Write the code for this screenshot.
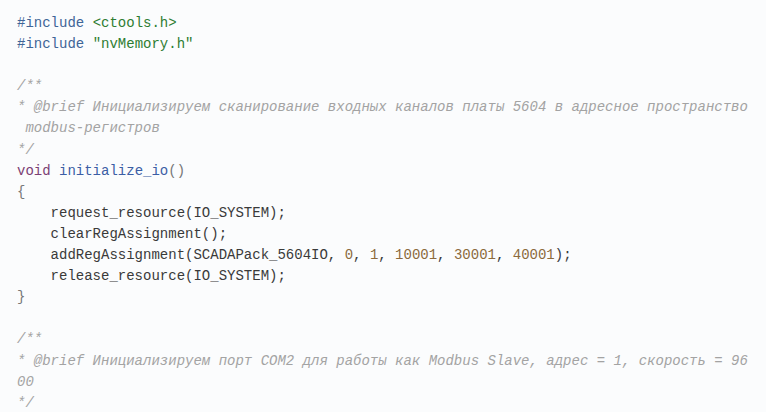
const kw = "text-[#3f6597]";
const str = "text-[#2e7d32]";
const typ = "text-[#7b3f74]";
const fn = "text-[#3b5ea5]";
const num = "text-[#8c6a3c]";
const cmt = "text-[#a3a3a3] italic";
const punc = "text-[#777777]";

function Line({ children }: { children?: React.ReactNode }) {
	return <div className="h-[21.1px] leading-[21.1px]">{children ?? " "}</div>;
}

export default function App() {
	return (
		<div className="w-[766px] h-[412px] overflow-hidden bg-[#fbfcfd]">
			<pre
				className="pt-[13px] pl-[17px] text-[14px] text-[#3a3a3a] whitespace-pre"
				style={{ fontFamily: '"Liberation Mono", "Courier New", monospace' }}
			>
				<Line>
					<span className={kw}>#include</span> <span className={str}>&lt;ctools.h&gt;</span>
				</Line>
				<Line>
					<span className={kw}>#include</span> <span className={str}>"nvMemory.h"</span>
				</Line>
				<Line />
				<Line>
					<span className={cmt}>/**</span>
				</Line>
				<Line>
					<span className={cmt}>
						* @brief Инициализируем сканирование входных каналов платы 5604 в адресное пространство
					</span>
				</Line>
				<Line>
					<span className={cmt}> modbus-регистров</span>
				</Line>
				<Line>
					<span className={cmt}>*/</span>
				</Line>
				<Line>
					<span className={typ}>void</span> <span className={fn}>initialize_io</span>
					<span className={punc}>()</span>
				</Line>
				<Line>
					<span className={punc}>{"{"}</span>
				</Line>
				<Line>{"    request_resource(IO_SYSTEM);"}</Line>
				<Line>{"    clearRegAssignment();"}</Line>
				<Line>
					{"    addRegAssignment(SCADAPack_5604IO, "}
					<span className={num}>0</span>, <span className={num}>1</span>,{" "}
					<span className={num}>10001</span>, <span className={num}>30001</span>,{" "}
					<span className={num}>40001</span>);
				</Line>
				<Line>{"    release_resource(IO_SYSTEM);"}</Line>
				<Line>
					<span className={punc}>{"}"}</span>
				</Line>
				<Line />
				<Line>
					<span className={cmt}>/**</span>
				</Line>
				<Line>
					<span className={cmt}>
						* @brief Инициализируем порт COM2 для работы как Modbus Slave, адрес = 1, скорость = 96
					</span>
				</Line>
				<Line>
					<span className={cmt}>00</span>
				</Line>
				<Line>
					<span className={cmt}>*/</span>
				</Line>
			</pre>
		</div>
	);
}
